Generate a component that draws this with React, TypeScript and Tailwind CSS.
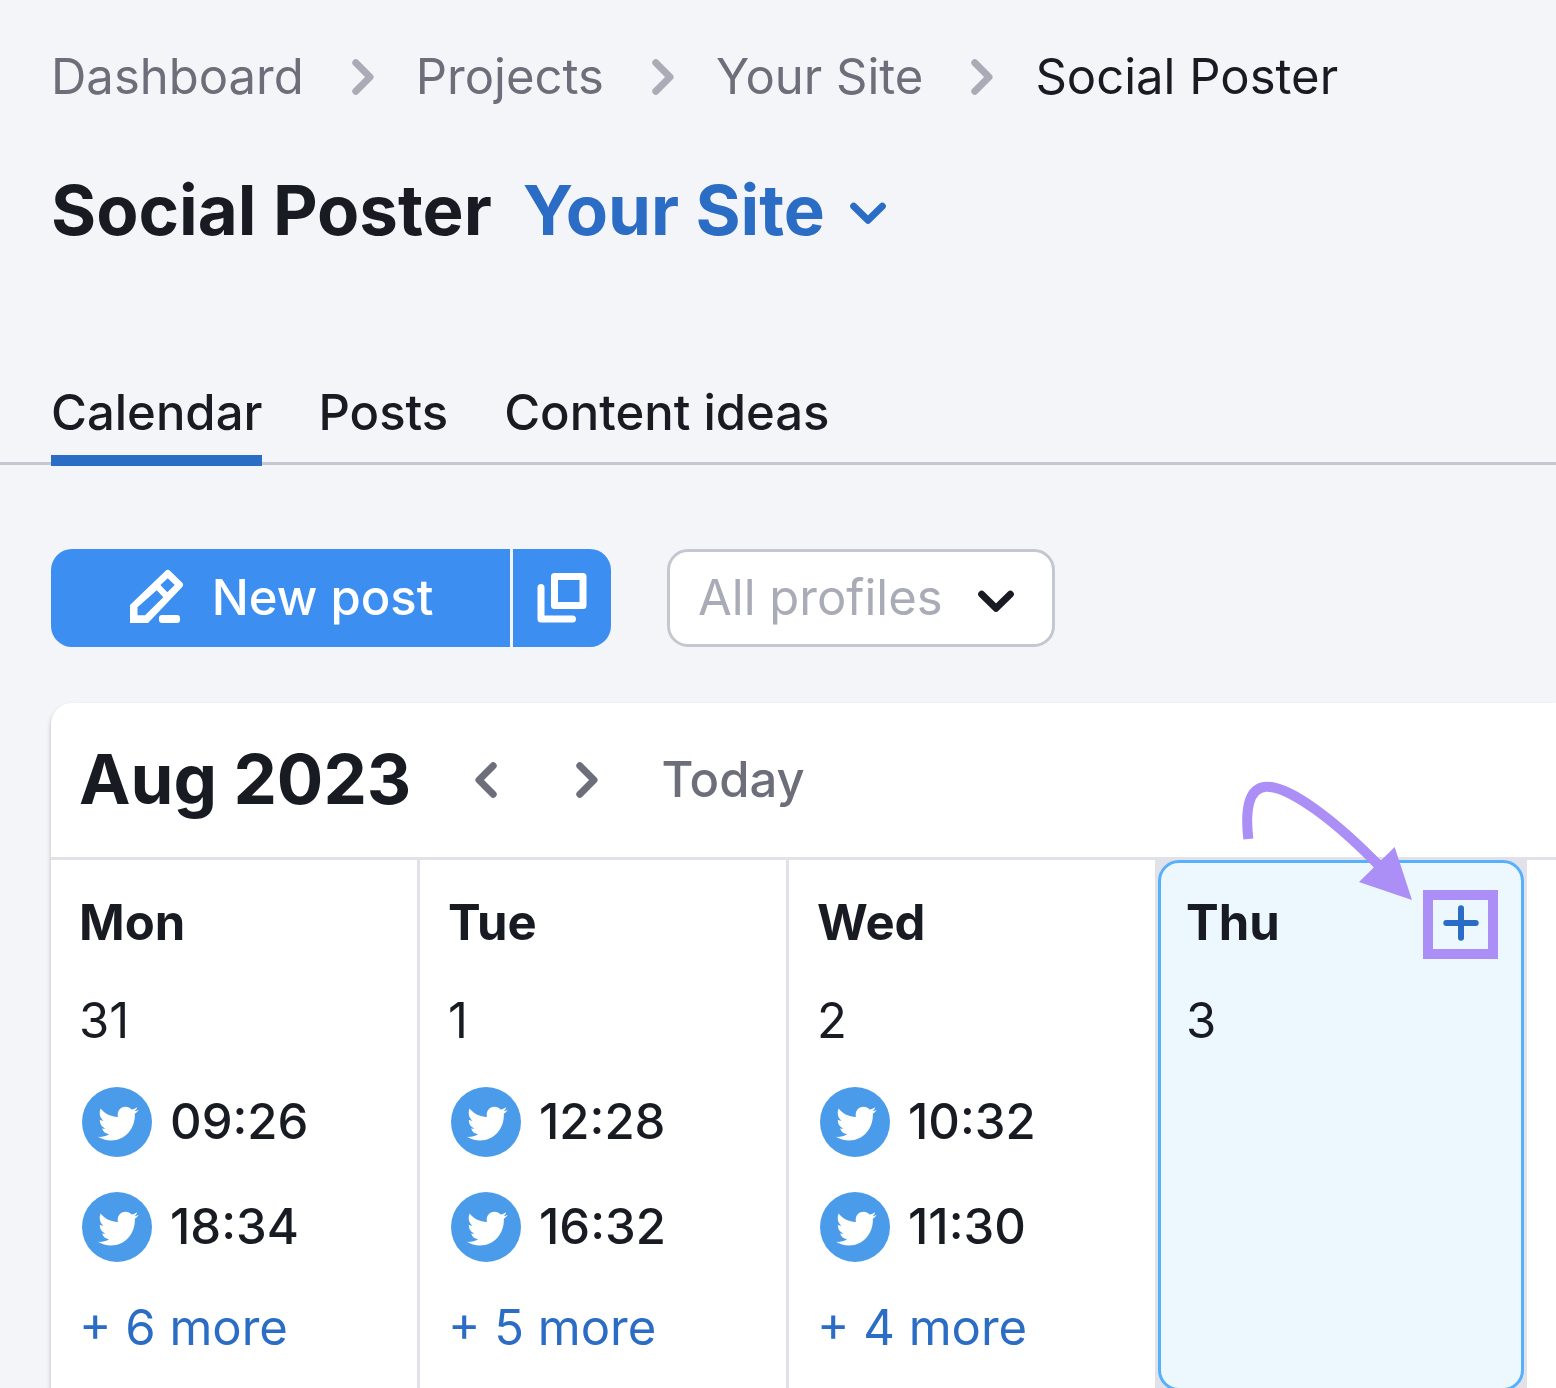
import { useState } from "react";

type Day = {
  name: string;
  date: number;
  posts: string[];
  more: number;
};

const crumbs = ["Dashboard", "Projects", "Your Site"];
const tabs = ["Calendar", "Posts", "Content ideas"];

const days: Day[] = [
  { name: "Mon", date: 31, posts: ["09:26", "18:34"], more: 6 },
  { name: "Tue", date: 1, posts: ["12:28", "16:32"], more: 5 },
  { name: "Wed", date: 2, posts: ["10:32", "11:30"], more: 4 },
];

function Chevron({ dir, className }: { dir: "left" | "right" | "down"; className?: string }) {
  if (dir === "down") {
    return (
      <svg viewBox="0 0 36 23" className={`h-[23px] w-9 shrink-0 ${className ?? ""}`} fill="none" aria-hidden="true">
        <path d="M3.7 4.2 18 18.2 32.3 4.2" stroke="currentColor" strokeWidth="7" strokeLinecap="round" strokeLinejoin="round" />
      </svg>
    );
  }
  return (
    <svg viewBox="0 0 22 36" className={`h-9 w-[22px] shrink-0 ${className ?? ""}`} fill="none" aria-hidden="true">
      <path
        d={dir === "right" ? "M3.8 3.8 18 18 3.8 32.2" : "M18.2 3.8 4 18 18.2 32.2"}
        stroke="currentColor"
        strokeWidth="7"
        strokeLinecap="round"
        strokeLinejoin="round"
      />
    </svg>
  );
}

function PencilIcon() {
  return (
    <svg viewBox="-1 0 56 58" className="h-[58px] w-14" fill="currentColor" aria-hidden="true">
      <path
        fillRule="evenodd"
        d="M1 36 36.4 1.9a3.4 3.4 0 0 1 4.8 0L53 13.4a3.4 3.4 0 0 1 0 4.8L19 54H1ZM8.5 38.3V46.3H16L34.3 28.3 27.7 21.3ZM38.8 9.3 45.7 16 38.3 23.3 31.4 16Z"
      />
      <rect x="30" y="46" width="21" height="8" rx="3" />
    </svg>
  );
}

function CopyIcon() {
  return (
    <svg
      viewBox="0 0 50 50"
      className="size-[50px]"
      fill="none"
      stroke="currentColor"
      strokeWidth="7"
      strokeLinejoin="round"
      aria-hidden="true"
    >
      <path d="M17.5 3.5H46V32.5H17.5Z" />
      <path d="M4 14.5V46H35.5" strokeLinecap="round" />
    </svg>
  );
}

function TwitterBadge() {
  return (
    <svg viewBox="6 6 212 212" className="size-[70px] shrink-0" role="img" aria-label="Twitter">
      <circle cx="112" cy="112" r="106" fill="#4a9bea" />
      <path
        d="M62 71C75 87 94 96 115 97C111 80 122 66 138 66C145 66 151 69 156 74C162 73 168 70 173 67C172 72 169 76 165 79C169 79 174 77 178 75C175 80 171 84 166 87C168 130 138 168 94 168C79 168 66 164 54 157C66 158 78 155 88 149C77 148 70 142 67 132C71 133 75 132 78 131C67 129 60 119 60 105C63 107 67 108 71 108C60 100 57 85 62 71Z"
        fill="#fff"
      />
    </svg>
  );
}

function DayColumn({ day }: { day: Day }) {
  return (
    <section className="w-[369px] shrink-0 border-r-[3px] border-[#e0e1e9] px-7 pt-7">
      <h3 className="font-bold leading-[70px]">{day.name}</h3>
      <p className="mt-7 leading-[70px]">{day.date}</p>
      <ul className="mt-[31px] flex flex-col gap-[35px]">
        {day.posts.map((time) => (
          <li key={time} className="flex items-center gap-[18px] pl-[3px] font-medium leading-[70px]">
            <TwitterBadge />
            <time>{time}</time>
          </li>
        ))}
      </ul>
      <a href="#" className="mt-[31px] block leading-[70px] text-[#2b6cc4]">
        + {day.more} more
      </a>
    </section>
  );
}

export default function App() {
  const [tab, setTab] = useState("Calendar");
  const [profile, setProfile] = useState("all");

  return (
    <div className="h-screen overflow-hidden bg-[#f4f5f9] font-['Inter',sans-serif] text-[49px] text-[#191b23]">
      <nav aria-label="Breadcrumb" className="flex items-center pt-[41px] pl-[51px] leading-[72px] text-[#6c6e79]">
        {crumbs.map((c) => (
          <span key={c} className="flex items-center">
            <a href="#">{c}</a>
            <Chevron dir="right" className="mr-[42px] ml-12 text-[#a9abb6]" />
          </span>
        ))}
        <span className="text-[#191b23]">Social Poster</span>
      </nav>

      <header className="mt-[57px] flex items-center gap-[31px] pl-[51px] text-[69px] font-bold leading-[80px]">
        <h1>Social Poster</h1>
        <button className="flex items-center gap-[25px] text-[#2b6cc4]">
          Your Site
          <Chevron dir="down" className="mt-1.5" />
        </button>
      </header>

      <div role="tablist" className="mt-[121px] flex gap-14 border-b-[3px] border-[#c4c7cf] pl-[51px] font-medium">
        {tabs.map((t) => (
          <button
            key={t}
            role="tab"
            aria-selected={t === tab}
            onClick={() => setTab(t)}
            className={`-mb-1 border-b-[11px] pt-[7px] pb-[7px] leading-[70px] ${
              t === tab ? "border-[#2b6cc4]" : "border-transparent"
            }`}
          >
            {t}
          </button>
        ))}
      </div>

      <div className="mt-[84px] flex gap-14 pl-[51px]">
        <div className="flex gap-[3px] font-medium text-white">
          <button className="flex h-[98px] w-[459px] items-center justify-center gap-7 rounded-l-[21px] bg-[#3c8ef1]">
            <PencilIcon />
            New post
          </button>
          <button
            aria-label="Duplicate post"
            className="flex h-[98px] w-[98px] items-center justify-center rounded-r-[21px] bg-[#3c8ef1]"
          >
            <CopyIcon />
          </button>
        </div>
        <div className="relative">
          <select
            aria-label="Profiles"
            value={profile}
            onChange={(e) => setProfile(e.target.value)}
            className="h-[98px] w-[388px] appearance-none rounded-[21px] border-[3px] border-[#c4c7cf] bg-white pl-7 text-[#a9abb6]"
          >
            <option value="all">All profiles</option>
            <option value="twitter">Twitter</option>
          </select>
          <Chevron dir="down" className="pointer-events-none absolute top-[41px] right-[41px] text-[#191b23]" />
        </div>
      </div>

      <main className="mt-14 ml-[51px] rounded-tl-[21px] bg-white shadow-[0_3px_4px_rgba(25,27,35,0.3)]">
        <div className="flex h-[157px] items-center border-b-[3px] border-[#e0e1e9] pl-7 text-[#6c6e79]">
          <h2 className="text-[69px] font-bold text-[#191b23]">Aug 2023</h2>
          <button aria-label="Previous month" className="ml-16">
            <Chevron dir="left" />
          </button>
          <button aria-label="Next month" className="ml-[79px]">
            <Chevron dir="right" />
          </button>
          <button className="ml-[63px] font-medium">Today</button>
        </div>

        <div className="flex h-[534px]">
          {days.map((day) => (
            <DayColumn key={day.name} day={day} />
          ))}

          <section className="-ml-[3px] w-[372px] shrink-0 bg-[#e0e1e9] px-[3px]">
            <div className="relative h-[531px] rounded-[21px] border-[3px] border-[#57b0fb] bg-[#ecf8fe] pt-[25px] pr-[23px] pl-[25px]">
              <div className="flex items-start justify-between">
                <h3 className="font-bold leading-[70px]">Thu</h3>
                <button
                  aria-label="Add post"
                  className="mt-[2px] flex h-[69px] w-[75px] items-center justify-center border-[10px] border-[#ab8ff6] text-[#2b6cc4]"
                >
                  <svg viewBox="0 0 36 36" className="mb-1 size-9" stroke="currentColor" strokeWidth="6" strokeLinecap="round" aria-hidden="true">
                    <path d="M18 3.3V32.7M3.3 18H32.7" />
                  </svg>
                </button>
              </div>
              <p className="mt-[27px] leading-[70px]">3</p>
              <svg
                viewBox="300 60 516 360"
                className="pointer-events-none absolute -top-[83px] left-[79px] h-[120px] w-[172px]"
                fill="none"
                aria-hidden="true"
              >
                <path d="M325 237C315 150 325 83 378 80 450 78 590 185 725 325" stroke="#ab8ff6" strokeWidth="30" />
                <path d="M764 261 816 420 657 366Z" fill="#ab8ff6" />
              </svg>
            </div>
          </section>
          <section className="grow" />
        </div>
      </main>
    </div>
  );
}
